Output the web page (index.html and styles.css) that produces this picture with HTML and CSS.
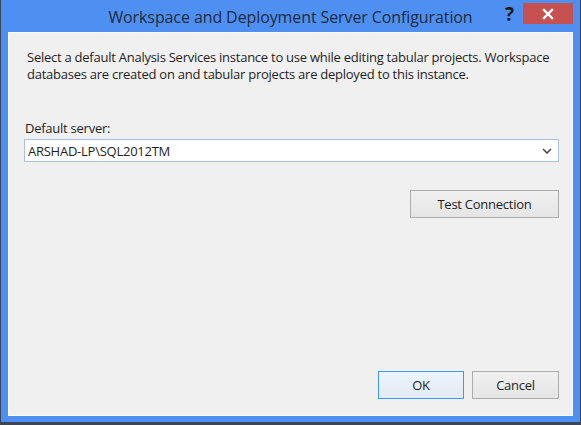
FILE: index.html
```html
<!DOCTYPE html>
<html>
<head>
<meta charset="utf-8">
<link rel="stylesheet" href="styles.css">
</head>
<body>
<div class="window">
  <div class="titlebar">
    <div class="title">Workspace and Deployment Server Configuration</div>
    <div class="help">?</div>
    <div class="close">
      <svg width="12" height="12" viewBox="0 0 12 12"><path d="M2 2 L10 10 M10 2 L2 10" stroke="#fff" stroke-width="2.4" stroke-linecap="square"/></svg>
    </div>
  </div>
  <div class="content">
    <p class="intro">Select a default Analysis Services instance to use while editing tabular projects. Workspace databases are created on and tabular projects are deployed to this instance.</p>
    <div class="label">Default server:</div>
    <div class="combo">
      <span class="combo-text">ARSHAD-LP\SQL2012TM</span>
      <svg class="chev" width="10" height="6" viewBox="0 0 10 6"><path d="M1 1 L5 5 L9 1" fill="none" stroke="#444" stroke-width="1.5"/></svg>
    </div>
    <div class="row-test">
      <div class="btn btn-test">Test Connection</div>
    </div>
    <div class="spacer"></div>
    <div class="row-actions">
      <div class="btn btn-ok">OK</div>
      <div class="btn btn-cancel">Cancel</div>
    </div>
  </div>
</div>
</body>
</html>
```

FILE: styles.css
```css
html, body {
  margin: 0;
  padding: 0;
}
body {
  width: 581px;
  height: 425px;
  background: #3c4656;
  overflow: hidden;
  font-family: "Open Sans", "Noto Sans", sans-serif;
  color: #1e1e1e;
}
.window {
  box-sizing: border-box;
  margin-left: 1px;
  width: 579px;
  height: 422px;
  background: #4e90f2;
  padding: 0 7px 6px 7px;
  display: flex;
  flex-direction: column;
}
.titlebar {
  height: 32px;
  flex: none;
  position: relative;
}
.title {
  position: absolute;
  left: 0;
  right: 0;
  top: 6px;
  text-align: center;
  font-size: 16px;
  letter-spacing: -0.1px;
  color: #1f2a3a;
}
.help {
  position: absolute;
  left: 497px;
  top: 1px;
  font-size: 19px;
  font-weight: 700;
  color: #1a1a1a;
}
.close {
  position: absolute;
  left: 515px;
  top: 3px;
  width: 50px;
  height: 21px;
  background: #c75050;
  display: flex;
  align-items: center;
  justify-content: center;
}
.content {
  flex: 1;
  box-sizing: border-box;
  background: #f0f0f0;
  border: 1px solid #fbfbfb;
  padding: 16px 13px 16px 15px;
  display: flex;
  flex-direction: column;
  font-size: 13px;
  letter-spacing: -0.25px;
}
.intro {
  margin: 0;
  line-height: 17px;
  padding-left: 3px;
}
.label {
  margin-top: 37px;
  padding-left: 1px;
  line-height: 17px;
}
.combo {
  margin-top: 2px;
  height: 23px;
  box-sizing: border-box;
  border: 1px solid #abc1de;
  background: #fff;
  display: flex;
  align-items: center;
  justify-content: space-between;
  padding: 0 6px 0 3px;
}
.combo-text {
  font-size: 13px;
}
.row-test {
  margin-top: 28px;
  display: flex;
  justify-content: flex-end;
}
.btn {
  box-sizing: border-box;
  height: 28px;
  display: flex;
  align-items: center;
  justify-content: center;
  border: 1px solid #acacac;
  background: linear-gradient(#f0f0f0, #e5e5e5);
  font-size: 13px;
}
.btn-test {
  width: 149px;
}
.spacer {
  flex: 1;
}
.row-actions {
  display: flex;
  justify-content: flex-end;
  gap: 8px;
}
.btn-ok {
  width: 86px;
  border: 1px solid #3c9af5;
  background: linear-gradient(#ecf4fc, #e2ebf5);
}
.btn-cancel {
  width: 87px;
}
```
